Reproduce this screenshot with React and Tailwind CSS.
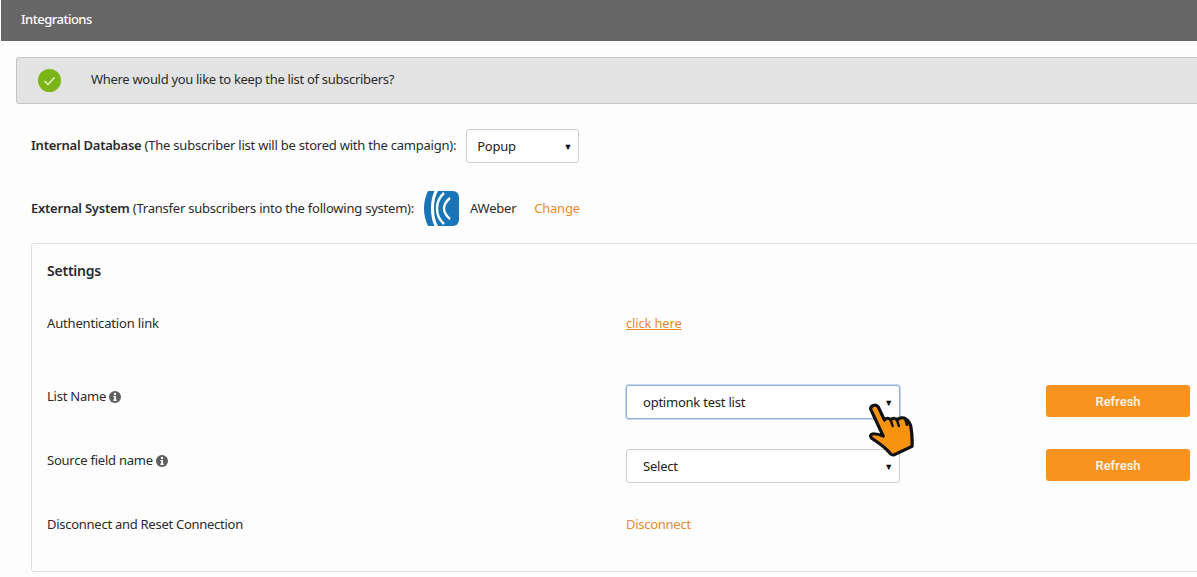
import React from "react";

function Info() {
  return (
    <svg width="12" height="12" viewBox="0 0 12 12" className="ml-[3px] shrink-0">
      <circle cx="6" cy="6" r="6" fill="#5f5f5f" />
      <circle cx="6" cy="3" r="1.2" fill="#fff" />
      <path d="M4.4 5h2.5v3.6h.8V10H4.4V8.6h.8V6.3h-.8z" fill="#fff" />
    </svg>
  );
}

function Check() {
  return (
    <svg width="23" height="23" viewBox="0 0 23 23" className="shrink-0">
      <circle cx="11.5" cy="11.5" r="11.5" fill="#7cb518" />
      <path d="M6.5 12l3.4 3.4L16.5 8.5" fill="none" stroke="#e8f5d0" strokeWidth="1.4" />
    </svg>
  );
}

function AWeber() {
  return (
    <svg width="35" height="35" viewBox="0 0 35 35" className="shrink-0">
      <path d="M4 0h25a6 6 0 0 1 6 6v23a6 6 0 0 1-6 6H4C1.500 30 0 24 0 17.500S1.500 5 4 0z" fill="#1a75b8" />
      <path d="M10.500 0C8 5 7 11 7 17.500S8 30 10.500 35h3.500C11 30 10 24 10 17.500S11 5 14 0z" fill="#fff" />
      <path d="M20 2c-4.500 4-7 9-7 15.500S15.500 29 20 33" fill="none" stroke="#fff" strokeWidth="2.400" />
      <path d="M26 7c-3.500 3-6 6-6 10.500S22.500 25 26 28" fill="none" stroke="#fff" strokeWidth="2.400" />
    </svg>
  );
}

function Hand() {
  return (
    <svg width="50" height="56" viewBox="0 0 40 47" preserveAspectRatio="none">
      <path
        d="M3 7c-.5-3 4-5 6-2l5 11c1-2 4-2 5 0 1.500-2 4-2 5 0 1.500-2 5-2.500 7-1 2 1 3 3 4 6 .8 5 1.500 10 1 17l-14 7c-1 .5-2 .5-3-.5-3-4-9-9-15-13-2-2-1-4 1-4 3 0 6 1 8 2z"
        fill="#f7930e"
        stroke="#111"
        strokeWidth="2.600"
        strokeLinejoin="round"
      />
      <path d="M19 16l1.500 5M24 16l1.500 5M30.500 15l1.500 5" stroke="#111" strokeWidth="2" strokeLinecap="round" />
    </svg>
  );
}

function Select({ label, focused, width = "w-[274px]", height = "h-[34px]", pad = "pl-4" }) {
  return (
    <div
      className={`${width} ${height} ${pad} flex items-center justify-between pr-[6px] bg-white rounded-[3px] border ${
        focused ? "border-[#8fb2dc] shadow-[0_0_0_1px_#c6d8ee]" : "border-[#cfcfcf]"
      } text-[#222]`}
    >
      <span className="pt-[2px]">{label}</span>
      <span className="text-[9px] leading-none text-[#111]">▼</span>
    </div>
  );
}

function Refresh() {
  return (
    <button
      className="w-[144px] h-8 pt-[2px] rounded-[3px] bg-[#f7931e] text-[#fff6e8] text-[13px] font-medium tracking-normal"
      style={{ fontFamily: "Roboto, sans-serif" }}
    >
      Refresh
    </button>
  );
}

export default function App() {
  return (
    <div
      className="w-[1197px] h-[577px] overflow-hidden bg-[#fdfdfd] text-[13px] tracking-[-0.23px] text-[#2b2b2b] pl-px"
      style={{ fontFamily: '"Noto Sans", sans-serif' }}
    >
      <div className="h-[41px] bg-[#666666] text-white flex items-center pl-5 pb-[2px] font-medium tracking-[-0.5px]">
        Integrations
      </div>

      <div className="mt-4 ml-[15px] w-[1200px] h-[47px] bg-[#e3e3e3] border border-[#c4c4c4] rounded-[3px] flex items-center pl-[21px]">
        <Check />
        <span className="ml-[30px] pb-[1px] tracking-[-0.31px]">Where would you like to keep the list of subscribers?</span>
      </div>

      <div className="mt-[25px] ml-[30px] flex items-center h-[34px]">
        <span>
          <b className="font-semibold">Internal Database</b> (The subscriber list will be stored with the campaign):
        </span>
        <div className="ml-[10px]">
          <Select label="Popup" width="w-[113px]" height="h-[34px]" pad="pl-[10px]" />
        </div>
      </div>

      <div className="mt-[28px] ml-[30px] flex items-center h-[35px]">
        <span>
          <b className="font-semibold">External System</b> (Transfer subscribers into the following system):
        </span>
        <div className="ml-[10px]">
          <AWeber />
        </div>
        <span className="ml-[11px]">AWeber</span>
        <span className="ml-[18px] text-[#e98a2c]">Change</span>
      </div>

      <div className="mt-[17px] ml-[30px] w-[1200px] h-[329px] border border-[#dedede] rounded-[3px] pl-[15px]">
        <div className="pt-[16px] font-semibold h-[61px] text-[14px]">Settings</div>

        <div className="flex items-center h-[36px] pt-[2px] tracking-[-0.17px]">
          <span className="w-[579px]">Authentication link</span>
          <span className="text-[#e98a2c] underline">click here</span>
        </div>

        <div className="mt-[44px] flex items-start h-[34px]">
          <span className="w-[579px] flex items-center h-[24px]">
            List Name
            <Info />
          </span>
          <div className="relative">
            <Select label="optimonk test list" focused />
            <div className="absolute left-[241px] top-[16px]">
              <Hand />
            </div>
          </div>
          <div className="ml-[146px]">
            <Refresh />
          </div>
        </div>

        <div className="mt-[30px] flex items-start h-[34px]">
          <span className="w-[579px] flex items-center h-[24px]">
            Source field name
            <Info />
          </span>
          <Select label="Select" />
          <div className="ml-[146px]">
            <Refresh />
          </div>
        </div>

        <div className="mt-[31px] flex items-center h-[22px] tracking-[-0.27px]">
          <span className="w-[579px]">Disconnect and Reset Connection</span>
          <span className="text-[#e98a2c]">Disconnect</span>
        </div>
      </div>
    </div>
  );
}
